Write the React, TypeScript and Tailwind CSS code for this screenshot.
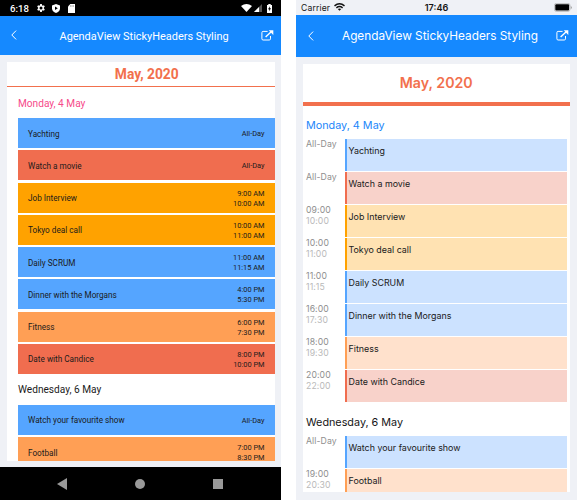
import React from "react";

type Tone = "blue" | "red" | "amber" | "orange";
type Item = { title: string; tone: Tone; am: string[]; h24: string[] };

const monday: Item[] = [
  { title: "Yachting", tone: "blue", am: ["All-Day"], h24: ["All-Day"] },
  { title: "Watch a movie", tone: "red", am: ["All-Day"], h24: ["All-Day"] },
  { title: "Job Interview", tone: "amber", am: ["9:00 AM", "10:00 AM"], h24: ["09:00", "10:00"] },
  { title: "Tokyo deal call", tone: "amber", am: ["10:00 AM", "11:00 AM"], h24: ["10:00", "11:00"] },
  { title: "Daily SCRUM", tone: "blue", am: ["11:00 AM", "11:15 AM"], h24: ["11:00", "11:15"] },
  { title: "Dinner with the Morgans", tone: "blue", am: ["4:00 PM", "5:30 PM"], h24: ["16:00", "17:30"] },
  { title: "Fitness", tone: "orange", am: ["6:00 PM", "7:30 PM"], h24: ["18:00", "19:30"] },
  { title: "Date with Candice", tone: "red", am: ["8:00 PM", "10:00 PM"], h24: ["20:00", "22:00"] },
];
const wednesday: Item[] = [
  { title: "Watch your favourite show", tone: "blue", am: ["All-Day"], h24: ["All-Day"] },
  { title: "Football", tone: "orange", am: ["7:00 PM", "8:30 PM"], h24: ["19:00", "20:30"] },
];

const solid: Record<Tone, string> = {
  blue: "bg-[#55a5ff]",
  red: "bg-[#f06d4f]",
  amber: "bg-[#ffa200]",
  orange: "bg-[#ff9f55]",
};
const soft: Record<Tone, string> = {
  blue: "bg-[#cce2ff] border-[#55a5ff]",
  red: "bg-[#f8d2ca] border-[#f06d4f]",
  amber: "bg-[#ffe2b2] border-[#ffa200]",
  orange: "bg-[#ffe1cc] border-[#ff9f55]",
};

function Back() {
  return (
    <svg width="6" height="10" viewBox="0 0 6 10" fill="none" stroke="white" strokeWidth="1">
      <path d="M5.1.6.8 5l4.3 4.4" />
    </svg>
  );
}

function External() {
  return (
    <svg width="13" height="11" viewBox="0 0 13 11" fill="none" stroke="white">
      <path d="M6.6 1.4H2.1Q.9 1.4.9 2.6v6.2Q.9 10 2.1 10h6.2q1.2 0 1.2-1.2V6" strokeWidth="1" />
      <path d="m4.6 6.9 5.6-5.2" strokeWidth="1.4" />
      <path d="M7.7.3h4.6v4.6Z" fill="white" stroke="none" />
    </svg>
  );
}

function AndroidRow({ item }: { item: Item }) {
  return (
    <div className={`flex h-[30px] shrink-0 items-center justify-between px-[10px] ${solid[item.tone]}`}>
      <span className="pt-px text-[8.2px] leading-[10px]">{item.title}</span>
      <div className="pt-[2px] text-right text-[7.4px] leading-[10px]">
        {item.am.map((t) => <div key={t}>{t}</div>)}
      </div>
    </div>
  );
}

function Android() {
  return (
    <div className="flex h-[500px] w-[281px] shrink-0 flex-col bg-[#eff1f6] font-['Roboto',sans-serif] text-[#1b1b1b]">
      <div className="flex h-4 shrink-0 items-center bg-black pl-[10px] pr-[9px] text-white">
        <span className="w-[27px] pt-px text-[9.6px] font-medium leading-none">6:18</span>
        <svg width="8" height="8" viewBox="0 0 24 24" fill="white" fillRule="evenodd">
          <path d="M9.5 0h5l.6 3.5 2.4 1.4 3.4-1.3 2.5 4.4-2.8 2.2v3.6l2.8 2.2-2.5 4.4-3.4-1.3-2.4 1.4-.6 3.5h-5l-.6-3.5-2.4-1.4-3.4 1.3L.6 16l2.8-2.2v-3.6L.6 8l2.5-4.4 3.4 1.3 2.4-1.4ZM12 7.5a4.5 4.5 0 1 0 0 9 4.5 4.5 0 0 0 0-9Z" />
        </svg>
        <svg className="ml-[7px]" width="8" height="9" viewBox="0 0 8 9">
          <path d="M4 0 8 1.4v3.1C8 6.8 6.4 8.3 4 9 1.6 8.3 0 6.8 0 4.5V1.4Z" fill="white" />
          <path d="M3 2.5 5.8 4.3 3 6.1Z" fill="black" />
        </svg>
        <svg className="ml-[8px]" width="7" height="9" viewBox="0 0 7 9">
          <path d="M2.3 0H7v9H0V2.4Z" fill="white" />
          <path d="M2.6 1.2v1.6M4 1.2v1.6M5.4 1.2v1.6" stroke="#777" strokeWidth=".6" />
        </svg>
        <svg className="ml-auto" width="11" height="8" viewBox="0 0 10 8" preserveAspectRatio="none">
          <path d="M0 2Q5-1.8 10 2L5 8Z" fill="white" />
        </svg>
        <svg className="ml-[2px]" width="8" height="8" viewBox="0 0 8 8">
          <path d="M0 8 8 0v8Z" fill="#555" />
          <path d="M0 8 5 3v5Z" fill="white" />
        </svg>
        <svg className="ml-[5px]" width="5" height="9" viewBox="0 0 5 9">
          <path d="M0 1h1.3V0h2.4v1H5v8H0Z" fill="white" />
          <path d="M3 2.2 1 5.3h1.2v2L4 4.3H2.8Z" fill="black" />
        </svg>
      </div>
      <div className="flex h-[38.5px] shrink-0 items-center bg-[#1589ff] pl-[11px] pr-[7px] text-white">
        <Back />
        <span className="ml-[42.5px] whitespace-nowrap pt-[3px] text-[10.95px]">AgendaView StickyHeaders Styling</span>
        <span className="ml-auto"><External /></span>
      </div>
      <div className="ml-[7px] mt-[7px] flex h-[399.5px] w-[267.5px] shrink-0 flex-col overflow-hidden bg-white">
        <div className="flex h-[24px] shrink-0 items-center justify-center pl-3 pt-px text-[13.8px] font-bold text-[#f2704d]">May, 2020</div>
        <div className="h-[1.5px] shrink-0 bg-[#f2704d]" />
        <div className="flex h-[31px] shrink-0 items-center pl-[11px] pt-[2px] text-[10.15px] text-[#f64a8a]">Monday, 4 May</div>
        <div className="ml-[11px] flex flex-col gap-[2.25px]">
          {monday.map((item) => <AndroidRow key={item.title} item={item} />)}
        </div>
        <div className="flex h-[31px] shrink-0 items-center pl-[11px] pt-px text-[10.15px]">Wednesday, 6 May</div>
        <div className="ml-[11px] flex flex-col gap-[2.25px]">
          {wednesday.map((item) => <AndroidRow key={item.title} item={item} />)}
        </div>
      </div>
      <div className="mt-auto flex h-[33px] shrink-0 items-center bg-black pl-[57px]">
        <svg width="10" height="12" viewBox="0 0 10 12"><path d="M10 0v12L0 6Z" fill="#999" /></svg>
        <div className="ml-[68px] size-[10px] rounded-full bg-[#999]" />
        <div className="ml-[68px] size-[10px] bg-[#999]" />
      </div>
    </div>
  );
}

function IosRow({ item }: { item: Item }) {
  return (
    <div className="flex h-8 shrink-0">
      <div className="w-[39px] shrink-0 text-[8.7px] leading-[10.5px] tracking-[0.1px] text-[#8e8e8e]">
        <div>{item.h24[0]}</div>
        <div className="text-[#b9b9b9]">{item.h24[1]}</div>
      </div>
      <div className={`w-[222px] border-l-2 pl-[1.5px] pt-[6px] text-[8.9px] leading-[11px] text-[#202020] ${soft[item.tone]}`}>{item.title}</div>
    </div>
  );
}

function Ios() {
  return (
    <div className="flex h-[500px] w-[281px] shrink-0 flex-col bg-[#eff1f6] font-['Inter',sans-serif] text-[#151515]">
      <div className="grid h-[15px] shrink-0 grid-cols-3 items-center px-[5px]">
        <div className="flex items-center gap-1 text-[8.6px] tracking-[0.15px]">
          <span className="pt-px">Carrier</span>
          <svg width="11" height="8" viewBox="0 0 11 8" fill="none" stroke="#111" strokeWidth="1.5">
            <path d="M.5 2.9Q5.5-1.3 10.5 2.9M2.4 4.8q3.1-2.5 6.2 0" />
            <path d="M3.8 6.1q1.7-1.2 3.4 0L5.5 7.8Z" fill="#111" stroke="none" />
          </svg>
        </div>
        <span className="text-center text-[9.1px] font-semibold">17:46</span>
        <svg className="ml-auto" width="18" height="9" viewBox="0 0 18 9">
          <rect x=".4" y=".4" width="15.6" height="8" rx="2" fill="none" stroke="#aaa" strokeWidth=".7" />
          <rect x="1.3" y="1.3" width="13.8" height="6.2" rx="1" fill="black" />
          <path d="M16.8 3v3q1-.5 1-1.5t-1-1.5Z" fill="#999" />
        </svg>
      </div>
      <div className="flex h-[42px] shrink-0 items-center bg-[#1589ff] pl-[12px] pr-[8px] text-white">
        <Back />
        <span className="ml-[28px] whitespace-nowrap pt-[2px] text-[11.8px]">AgendaView StickyHeaders Styling</span>
        <span className="mb-[2px] ml-auto"><External /></span>
      </div>
      <div className="ml-[7px] mt-[7px] flex h-[428px] w-[266.5px] shrink-0 flex-col overflow-hidden bg-white">
        <div className="flex h-[38px] shrink-0 items-center justify-center text-[14.2px] font-semibold text-[#f2704d]">May, 2020</div>
        <div className="h-[3.5px] shrink-0 bg-[#f2704d]" />
        <div className="flex h-[33.5px] shrink-0 items-center pl-[3px] pt-[8px] text-[10.8px] text-[#1b86fa]">Monday, 4 May</div>
        <div className="ml-[3px] flex flex-col gap-px">
          {monday.map((item) => <IosRow key={item.title} item={item} />)}
        </div>
        <div className="flex h-[34px] shrink-0 items-center pl-[3px] pt-[8px] text-[10.8px]">Wednesday, 6 May</div>
        <div className="ml-[3px] flex flex-col gap-px">
          {wednesday.map((item) => <IosRow key={item.title} item={item} />)}
        </div>
      </div>
    </div>
  );
}

export default function App() {
  return (
    <div className="flex h-[500px] w-[577px] justify-between overflow-hidden bg-white">
      <Android />
      <Ios />
    </div>
  );
}
